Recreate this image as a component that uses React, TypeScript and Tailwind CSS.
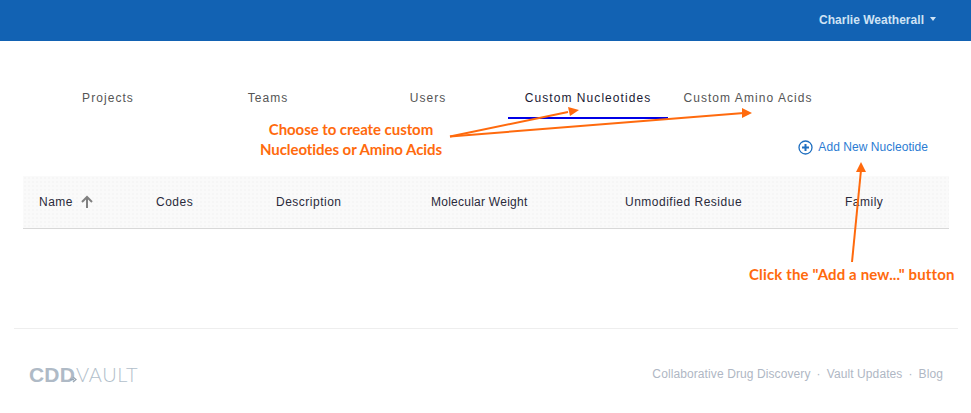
import React from 'react';

const tabs = ['Projects', 'Teams', 'Users', 'Custom Nucleotides', 'Custom Amino Acids'];

const columns = [
  { label: 'Name', width: 'w-[117px]', tracking: 'tracking-[0.5px]' },
  { label: 'Codes', width: 'w-[120px]', tracking: 'tracking-[0.5px]' },
  { label: 'Description', width: 'w-[155px]', tracking: 'tracking-[0.5px]' },
  { label: 'Molecular Weight', width: 'w-[194px]', tracking: 'tracking-[0.25px]' },
  { label: 'Unmodified Residue', width: 'w-[220px]', tracking: 'tracking-[0.5px]' },
  { label: 'Family', width: 'w-[80px]', tracking: 'tracking-[0.5px]' },
];

const Annotations: React.FC = () => (
  <>
    <svg className="absolute left-0 top-0" width="971" height="413" viewBox="0 0 971 413" fill="none">
      <g stroke="#ff6a0d" strokeWidth="2">
        <line x1="450" y1="136.5" x2="568" y2="112" />
        <line x1="450" y1="136.5" x2="744" y2="113" />
        <line x1="852" y1="262" x2="861" y2="170" />
      </g>
      <g fill="#ff6a0d">
        <polygon points="579,110 568,107 570,116" />
        <polygon points="752,113 742,108 742,118" />
        <polygon points="861,162 856,172 866,172" />
      </g>
    </svg>
    <div className="absolute left-[245px] top-[119px] w-[212px] text-center font-['Lato',sans-serif] text-[15px] font-bold leading-[20px] tracking-[-0.07px] text-[#ff6a0d]">
      <div>Choose to create custom</div>
      <div className="whitespace-nowrap">Nucleotides or Amino Acids</div>
    </div>
    <div className="absolute left-[749px] top-[264px] whitespace-nowrap font-['Lato',sans-serif] text-[15px] font-bold leading-[20px] tracking-[0.14px] text-[#ff6a0d]">
      Click the "Add a new..." button
    </div>
  </>
);

export default function App() {
  return (
    <div className="relative h-[413px] w-[971px] overflow-hidden bg-white font-['Liberation_Sans',sans-serif]">
      <header className="flex h-[41px] items-center justify-end bg-[#1262b3] pb-[1px] pr-[35px]">
        <span className="text-[12px] font-bold tracking-[0.03px] text-[#cfe3f5]">Charlie Weatherall</span>
        <span className="ml-[6px] mb-[2px] h-0 w-0 border-x-[3px] border-t-[4px] border-x-transparent border-t-[#cfe3f5]" />
      </header>

      <nav className="ml-[28px] mt-[37px] flex">
        {tabs.map((tab) => (
          <div
            key={tab}
            className={`flex h-[41px] w-[160px] items-center justify-center border-b-2 pt-[1px] text-[12px] tracking-[1.06px] ${
              tab === 'Custom Nucleotides' ? 'border-[#0000e6] text-[#1a1a33]' : 'border-transparent text-[#555555]'
            }`}
          >
            {tab}
          </div>
        ))}
      </nav>

      <div className="mr-[43px] mt-[19px] flex h-[18px] items-center justify-end text-[12px] tracking-[0.05px] text-[#2b7cd3]">
        <svg width="15" height="15" viewBox="0 0 15 15" fill="none" className="mr-[5px]">
          <circle cx="7.5" cy="7.5" r="6.5" stroke="#1f6fc0" strokeWidth="1.3" />
          <path d="M4 7.5h7M7.5 4v7" stroke="#1f6fc0" strokeWidth="2" />
        </svg>
        Add New Nucleotide
      </div>

      <div className="mx-[23px] mt-[20px] flex h-[53px] w-[926px] items-center border-b border-[#d8d8d8] bg-[#fafafa] bg-[radial-gradient(#f6f6f6_1px,transparent_1px)] bg-[length:4px_4px] pl-[16px] text-[12px] text-[#2a2a3a]">
        {columns.map((col) => (
          <div key={col.label} className={`flex shrink-0 items-center ${col.width} ${col.tracking}`}>
            {col.label}
            {col.label === 'Name' && (
              <svg width="14" height="14" viewBox="0 0 14 14" fill="none" className="ml-[7px]">
                <path d="M7 13V2M2 7l5-5 5 5" stroke="#808080" strokeWidth="2" />
              </svg>
            )}
          </div>
        ))}
      </div>

      <footer className="mx-[14px] mt-[99px] flex h-[86px] w-[944px] items-center justify-between border-t border-[#eeeeee] pl-[15px] pr-[15px] pt-[5px]">
        <div className="relative flex items-baseline leading-none text-[#b3bfcb]">
          <span className="text-[21px] font-bold tracking-[0.2px] text-[#afbac6]">CDD</span>
          <span className="ml-[1px] font-['Lato',sans-serif] text-[20px] font-light tracking-[0.6px]">VAULT</span>
          <svg className="absolute left-[41px] top-[12px]" width="7" height="7" viewBox="0 0 7 7" fill="none">
            <path d="M0 3.5h4M3 1l3 2.5L3 6" stroke="#9aa7b4" strokeWidth="1.4" />
          </svg>
        </div>
        <div className="flex items-center text-[12px] tracking-[0.1px] text-[#afb7c4]">
          <span>Collaborative Drug Discovery</span>
          <span className="mx-[6px]">·</span>
          <span>Vault Updates</span>
          <span className="mx-[6px]">·</span>
          <span>Blog</span>
        </div>
      </footer>

      <Annotations />
    </div>
  );
}
